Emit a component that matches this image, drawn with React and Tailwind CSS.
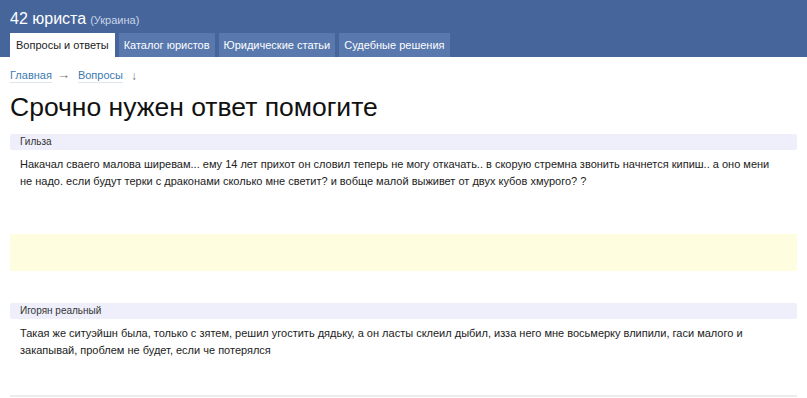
const tabs = ['Вопросы и ответы', 'Каталог юристов', 'Юридические статьи', 'Судебные решения']

const posts = [
  {
    author: 'Гильза',
    text: 'Накачал сваего малова ширевам... ему 14 лет прихот он словил теперь не могу откачать.. в скорую стремна звонить начнется кипиш.. а оно мени не надо. если будут терки с драконами сколько мне светит? и вобще малой выживет от двух кубов хмурого? ?',
  },
  {
    author: 'Игорян реальный',
    text: 'Такая же ситуэйшн была, только с зятем, решил угостить дядьку, а он ласты склеил дыбил, изза него мне восьмерку влипили, гаси малого и закапывай, проблем не будет, если че потерялся',
  },
]

function Post({ author, text }) {
  return (
    <div>
      <div className="bg-[#eeeffa] rounded-[2px] h-[16px] pl-[10px] text-[10px] leading-[16px] text-[#333]">{author}</div>
      <p className="pl-[10px] pr-[14px] pt-[6px] text-[11px] leading-[17px] text-[#222]">{text}</p>
    </div>
  )
}

export default function App() {
  return (
    <div className="w-[807px] h-[398px] overflow-hidden bg-white font-['Liberation_Sans',Arial,sans-serif]">
      <div className="bg-[#46659b] pt-[7px] px-[10px]">
        <div className="flex items-baseline gap-[4px] h-[26px]">
          <span className="text-[16px] text-white">42 юриста</span>
          <span className="text-[11px] text-[#c9d4e8]">(Украина)</span>
        </div>
        <div className="flex gap-[4px]">
          {tabs.map((t, i) => (
            <div
              key={t}
              className={i === 0
                ? 'bg-white text-[#222] h-[24px] px-[6px] text-[11px] leading-[25px]'
                : 'bg-[#5878ae] text-white h-[24px] px-[5px] text-[11px] leading-[25px]'}
            >
              {t}
            </div>
          ))}
        </div>
      </div>

      <div className="px-[10px]">
        <div className="mt-[12px] h-[14px] text-[11px] leading-[13px] text-[#3d7ab0] flex items-center gap-[5px]">
          <span className="border-b border-[#dbe6ef]">Главная</span>
          <span className="text-[#777] text-[13px] leading-[8px] pb-[3px]">→</span>
          <span className="ml-[3px] border-b border-[#dbe6ef]">Вопросы</span>
          <span className="ml-[3px] text-[#777] text-[12px] leading-[13px]">↓</span>
        </div>
        <h1 className="mt-[8px] text-[26.5px] leading-[32px] text-[#111]">Срочно нужен ответ помогите</h1>

        <div className="mt-[11px]">
          <Post {...posts[0]} />
        </div>
        <div className="mt-[44px] h-[37px] bg-[#fffde0]" />
        <div className="mt-[32px]">
          <Post {...posts[1]} />
        </div>
        <div className="mt-[36px] border-t-2 border-[#ececec]" />
      </div>
    </div>
  )
}
